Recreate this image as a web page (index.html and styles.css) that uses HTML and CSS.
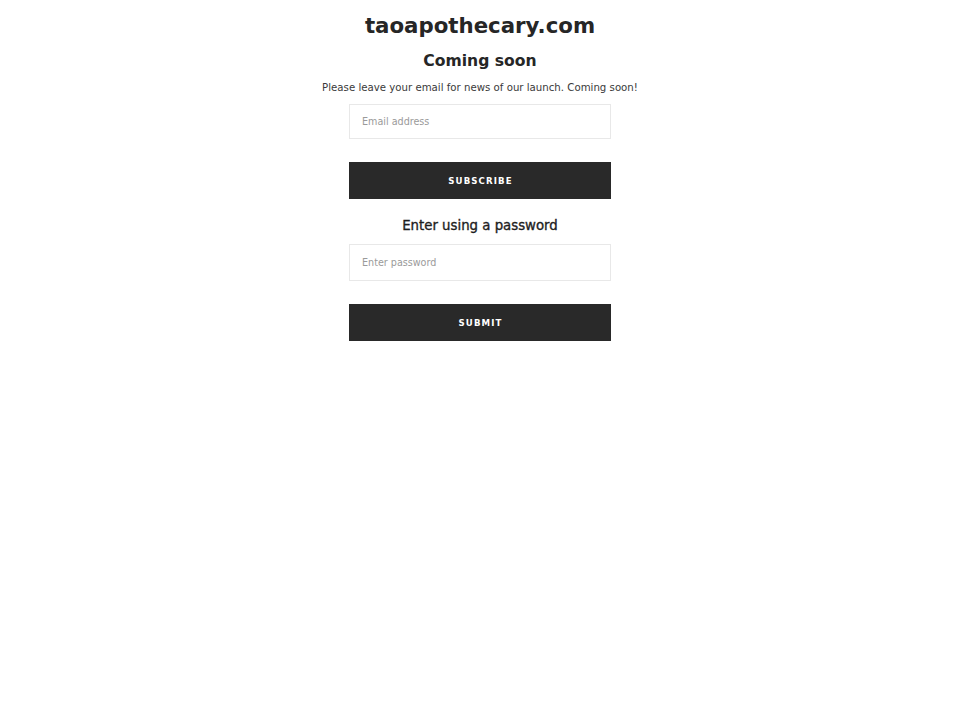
FILE: index.html
```html
<!DOCTYPE html>
<html>
<head>
<meta charset="utf-8">
<link rel="stylesheet" href="styles.css">
<title>taoapothecary.com</title>
</head>
<body>
<main class="page">
  <h1 class="site-title">taoapothecary.com</h1>
  <h2 class="coming">Coming soon</h2>
  <p class="intro">Please leave your email for news of our launch. Coming soon!</p>
  <form class="form form-email">
    <input class="field" type="email" placeholder="Email address">
    <button class="btn" type="button">Subscribe</button>
  </form>
  <h3 class="pw-title">Enter using a password</h3>
  <form class="form form-pw">
    <input class="field" type="password" placeholder="Enter password">
    <button class="btn" type="button">Submit</button>
  </form>
</main>
</body>
</html>
```
FILE: styles.css
```css
html, body {
  margin: 0;
  padding: 0;
  background: #fff;
}
body {
  font-family: "DejaVu Sans", sans-serif;
  color: #262626;
}
.page {
  display: flex;
  flex-direction: column;
  align-items: center;
  padding-top: 12px;
}
.site-title {
  margin: 0;
  font-size: 21.3px;
  line-height: 28px;
  font-weight: bold;
  color: #262626;
}
.coming {
  margin: 10px 0 0;
  font-size: 15.6px;
  line-height: 22px;
  font-weight: bold;
  color: #262626;
}
.intro {
  margin: 8px 0 0;
  font-size: 10.2px;
  line-height: 16px;
  color: #3a3a3a;
}
.form {
  display: flex;
  flex-direction: column;
  width: 262px;
  gap: 23px;
}
.form-email { margin-top: 8px; }
.form-pw { margin-top: 9px; }
.form-email .field { height: 35px; }
.field {
  box-sizing: border-box;
  height: 37px;
  width: 100%;
  border: 1px solid #e8e8e8;
  padding: 0 12px;
  font-family: "DejaVu Sans", sans-serif;
  font-size: 9.6px;
  color: #333;
  outline: none;
  margin: 0;
  background: #fff;
}
.field::placeholder { color: #9a9a9a; }
.btn {
  box-sizing: border-box;
  height: 37px;
  width: 100%;
  border: none;
  background: #292929;
  color: #fff;
  font-family: "DejaVu Sans", sans-serif;
  font-weight: bold;
  font-size: 8.6px;
  letter-spacing: 1.1px;
  text-transform: uppercase;
  margin: 0;
  padding: 0 0 0 1px;
}
.pw-title {
  margin: 18px 0 0;
  font-size: 13.3px;
  line-height: 18px;
  font-weight: normal;
  color: #1e1e1e;
  -webkit-text-stroke: 0.35px #1e1e1e;
}
```
